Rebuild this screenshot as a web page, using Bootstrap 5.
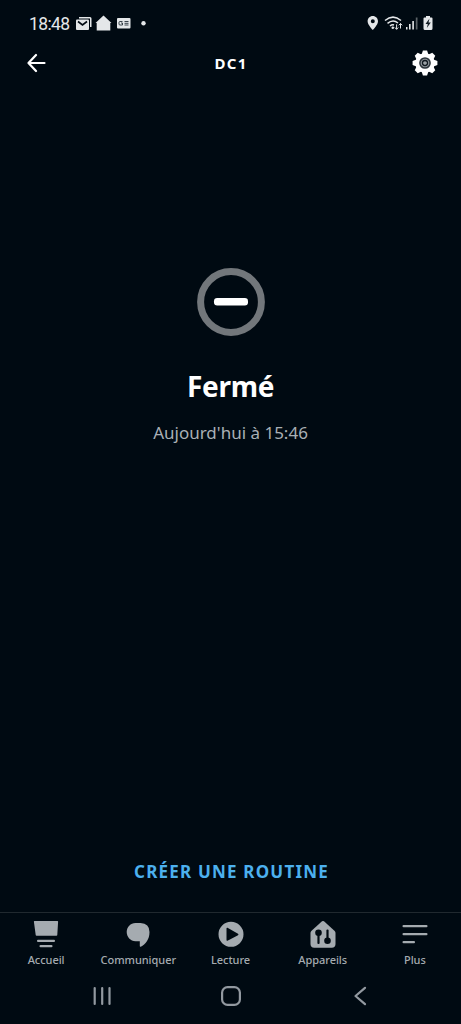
<!DOCTYPE html>
<html lang="fr">
<head>
<meta charset="utf-8">
<meta name="viewport" content="width=device-width, initial-scale=1">
<title>DC1</title>
<link href="https://cdn.jsdelivr.net/npm/bootstrap@5.3.0/dist/css/bootstrap.min.css" rel="stylesheet">
<style>
  body { background: #000a12; color: #fff; font-family: "Noto Sans", "Open Sans", sans-serif; height: 1024px; overflow: hidden; }
  svg { display: block; flex: none; }
  .statusbar { height: 46px; padding: 0 28px 0 29px; color: #e4e7e9; }
  .clock { font: 17.5px/20px Roboto, sans-serif; width: 47px; letter-spacing: -.6px; padding-top: 1px; }
  .topbar { height: 34px; padding: 0 23px 0 27px; }
  .topbar h1 { font-size: 15px; font-weight: 700; letter-spacing: 1.3px; line-height: 20px; }
  .state { padding-top: 188px; }
  .state h2 { font-size: 28px; font-weight: 700; line-height: 38px; margin: 31px 0 0; letter-spacing: -.3px; }
  .state p { font-size: 17px; line-height: 24px; margin: 16px 0 0; color: #a9b0b5; }
  .routine { color: #4cb0ee; font-size: 17px; font-weight: 700; letter-spacing: 1.2px; line-height: 24px; margin-bottom: 28px; padding-left: 2px; }
  .tabs { height: 57px; border-top: 1px solid #20292f; color: #a5abb0; }
  .tabs a { color: inherit; font-size: 11px; font-weight: 500; line-height: 16px; letter-spacing: -.05px; padding-top: 7px; gap: 1.500px; width: 92.2px; }
  .sysnav { height: 55px; color: #9299a0; padding: 0 94px 2px 93px; }
</style>
</head>
<body class="d-flex flex-column">
<div class="statusbar d-flex align-items-center">
  <span class="clock">18:48</span>
  <svg width="74" height="18" viewBox="76 14 74 18" fill="currentColor">
    <path d="M79 17h11a1.5 1.5 0 0 1 1.5 1.500v8.500h-1.500v-8.500H79z"/>
    <rect x="76" y="19.500" width="13" height="10.500" rx="1"/>
    <path d="M78 21.500l4.500 3.500 4.500-3.500" fill="none" stroke="#000a12" stroke-width="1.600"/>
    <path d="M103.500 15.500l8 7.500h-1.200v7.500h-13.600v-7.500h-1.200z"/>
    <rect x="117" y="18" width="13.500" height="10.500" rx="1"/>
    <path d="M122.500 21.500h-2.500q-1 0-1 1v1.500q0 1 1 1h2.500v-2h-1.500M124.500 21.500h4M124.500 23.300h4M124.500 25h4" fill="none" stroke="#26313a" stroke-width=".9"/>
    <circle cx="143.500" cy="23.300" r="2.200"/>
  </svg>
  <svg class="ms-auto" width="66" height="18" viewBox="367 14 66 18" fill="currentColor">
    <path fill-rule="evenodd" d="M372.800 16c-3 0-5.200 2.300-5.200 5.200 0 3.600 5.200 8.800 5.200 8.800s5.200-5.200 5.200-8.800c0-2.900-2.200-5.200-5.200-5.200zm0 3.200a2 2 0 1 1 0 4 2 2 0 0 1 0-4z"/>
    <g fill="none" stroke="currentColor" stroke-width="1.500">
      <path d="M385 20.500q8-6.800 16 0M387.500 23.300q5.500-4.500 10.500-.3M390 26q2-1.700 4-1"/>
      <path d="M396.600 24.300v5M394.900 27.500l1.700 1.800 1.700-1.800M400.500 28.500v-5M398.800 25.300l1.700-1.800 1.700 1.800" stroke-width="1"/>
    </g>
    <circle cx="392.800" cy="27.800" r="1.300"/>
    <path d="M406 27h1.500v2.500H406zM409 24h1.600v5.500H409zM412.300 21h1.600v8.500h-1.600z"/>
    <path d="M415.800 17.500h1.700v12h-1.700z" opacity=".4"/>
    <path d="M426 16h4v1.500h1.500q1 0 1 1v10q0 1.500-1.500 1.500h-6q-1.500 0-1.500-1.500v-10q0-1 1-1h1.500z"/>
    <path d="M429.500 18.500l-4 5.500h2.300l-1 4 4-5.500h-2.300z" fill="#111b22"/>
  </svg>
</div>

<header class="topbar d-flex align-items-center justify-content-between">
  <svg width="19" height="20" viewBox="0 0 19 20" fill="none" stroke="#fff" stroke-width="2.200" stroke-linecap="round" stroke-linejoin="round"><path d="M17.500 10H1.500M9 2 1.500 10 9 18"/></svg>
  <h1 class="m-0 ps-1">DC1</h1>
  <svg width="26" height="26" viewBox="-13 -13 26 26">
    <g fill="#fff">
      <circle r="9.700"/>
      <g id="teeth"><path id="tooth" d="M-3.400-8.500-2.100-12.400h4.200L3.400-8.500V8.500L2.100 12.400h-4.200L-3.400 8.500z"/><use href="#tooth" transform="rotate(90)"/></g>
      <use href="#teeth" transform="rotate(45)"/>
    </g>
    <circle r="5.100" fill="#8c9297" stroke="#2a3339" stroke-width="1.500"/>
    <circle r="2.500" fill="#9ba1a5" stroke="#10191f" stroke-width="1.300"/>
  </svg>
</header>

<main class="state flex-grow-1 d-flex flex-column align-items-center">
  <svg width="68" height="68" viewBox="0 0 68 68"><circle cx="34" cy="34" r="30.400" fill="none" stroke="#72777b" stroke-width="7"/><rect x="17" y="30" width="34" height="7.400" rx="3.200" fill="#fff"/></svg>
  <h2>Fermé</h2>
  <p>Aujourd'hui à 15:46</p>
  <a href="#" class="routine mt-auto text-decoration-none">CRÉER UNE ROUTINE</a>
</main>

<nav class="tabs d-flex justify-content-between">
  <a href="#" class="d-flex flex-column align-items-center text-decoration-none">
    <svg width="28" height="30" viewBox="0 0 28 30" fill="currentColor"><path d="M2.500 1h23q.7 0 .6.700l-.8 13.300q-.1.800-.9.800H4.600q-.8 0-.9-.8L1.900 1.700Q1.800 1 2.500 1z"/><rect x="5" y="19.700" width="18" height="2.200" rx="1"/><rect x="7.500" y="25" width="13" height="2.200" rx="1"/></svg>
    Accueil
  </a>
  <a href="#" class="d-flex flex-column align-items-center text-decoration-none">
    <svg width="28" height="30" viewBox="0 0 28 30" fill="currentColor"><path d="M11.500 3h5Q25.500 3.500 25.500 12c0 7.500-4 12.500-8.700 14.700q-1 .3-1-.7V21.200h-4.300C6.500 21 2.700 17 2.700 12S6.500 3 11.500 3z"/></svg>
    Communiquer
  </a>
  <a href="#" class="d-flex flex-column align-items-center text-decoration-none">
    <svg width="28" height="30" viewBox="0 0 28 30" fill="currentColor"><path fill-rule="evenodd" d="M14 1.800a12.500 12.500 0 1 1 0 25 12.500 12.500 0 0 1 0-25zM9.500 8.600v11.500q0 1 1 .6l10.500-5.500q1-.8 0-1.500L10.500 7.800q-1-.3-1 .8z"/></svg>
    Lecture
  </a>
  <a href="#" class="d-flex flex-column align-items-center text-decoration-none">
    <svg width="28" height="30" viewBox="0 0 28 30"><path d="M13 1.300q1-.8 2 0L25.700 11q.8.800.8 2V24q0 3.700-3.700 3.700H5.200Q1.500 27.700 1.500 24V13q0-1.200.8-2z" fill="currentColor"/><g fill="#000a12"><circle cx="9.500" cy="12.800" r="3.300"/><rect x="8.400" y="13" width="2.200" height="11" rx="1"/><circle cx="18.500" cy="20.800" r="3.300"/><rect x="17.400" y="9.500" width="2.200" height="11" rx="1"/></g></svg>
    Appareils
  </a>
  <a href="#" class="d-flex flex-column align-items-center text-decoration-none">
    <svg width="28" height="30" viewBox="0 0 28 30" fill="currentColor"><rect x="1.500" y="5" width="25" height="2.200" rx="1"/><rect x="1.500" y="13" width="25" height="2.200" rx="1"/><rect x="1.500" y="21" width="12.500" height="2.200" rx="1"/></svg>
    Plus
  </a>
</nav>

<div class="sysnav d-flex justify-content-between align-items-center" aria-hidden="true">
  <svg width="18" height="20" viewBox="0 0 18 20" fill="none" stroke="currentColor" stroke-width="2.200" stroke-linecap="round"><path d="M1.700 2v16M9.200 2v16M16.500 2v16"/></svg>
  <svg width="20" height="20" viewBox="1 0 20 20" fill="none" stroke="currentColor" stroke-width="2.200" overflow="visible"><rect x="1.100" y="1.100" width="17.800" height="17.800" rx="5.500"/></svg>
  <svg width="14" height="20" viewBox="0 0 14 20" fill="none" stroke="currentColor" stroke-width="2.200" stroke-linecap="round" stroke-linejoin="round"><path d="M12 1.800 2.500 10l9.500 8.200"/></svg>
</div>
<script src="https://cdn.jsdelivr.net/npm/bootstrap@5.3.0/dist/js/bootstrap.bundle.min.js"></script>
</body>
</html>
